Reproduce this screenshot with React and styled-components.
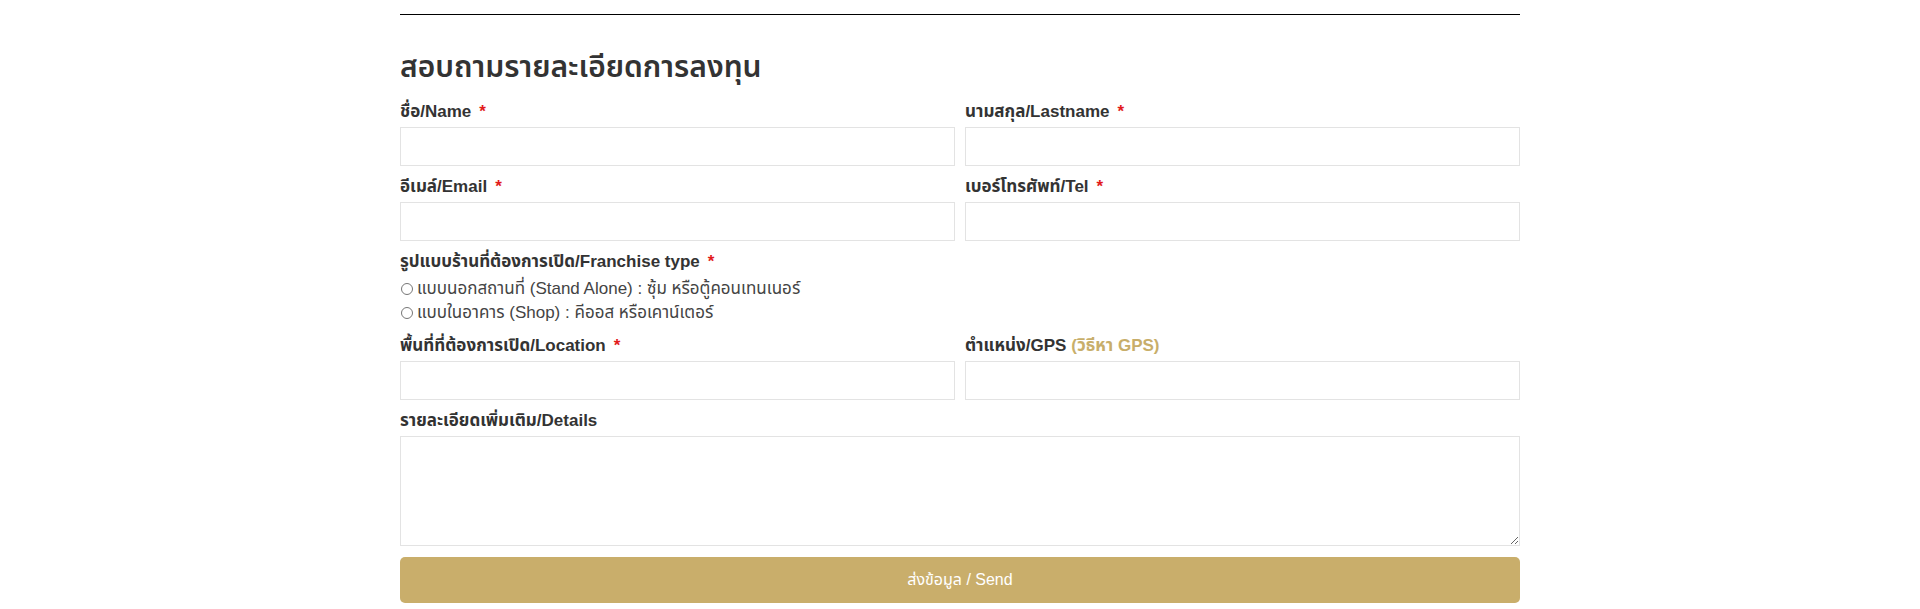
import React from "react"
import styled, { createGlobalStyle } from "styled-components"

const GlobalStyle = createGlobalStyle`
  body {
    margin: 0;
    background: #fff;
    font-family: "Liberation Sans", "Noto Sans Thai", "Noto Sans", sans-serif;
    color: #333;
  }
`

const Wrapper = styled.div`
  width: 1120px;
  margin: 0 auto;
  padding-top: 14px;
`

const Divider = styled.hr`
  margin: 0;
  border: none;
  border-top: 1px solid #000;
`

const Title = styled.h2`
  margin: 30px 0 13px;
  height: 43px;
  line-height: 43px;
  font-size: 30px;
  font-weight: 600;
  color: #333;
`

const Form = styled.form`
  display: flex;
  flex-direction: column;
  gap: 10px;
`

const Row = styled.div`
  display: grid;
  grid-template-columns: 1fr 1fr;
  column-gap: 10px;
`

const Field = styled.div`
  display: flex;
  flex-direction: column;
`

const Label = styled.label`
  height: 22px;
  line-height: 22px;
  margin-bottom: 4px;
  font-size: 17px;
  font-weight: 700;
  color: #333;
`

const Required = styled.span`
  margin-left: 8px;
  color: #e21b1b;
`

const Hint = styled.a`
  margin-left: 5px;
  color: #c8ae6a;
  text-decoration: none;
`

const Input = styled.input`
  box-sizing: border-box;
  width: 100%;
  height: 39px;
  border: 1px solid #e3e3e3;
  padding: 0 10px;
  font-size: 16px;
  outline: none;
`

const TextArea = styled.textarea`
  box-sizing: border-box;
  width: 100%;
  height: 110px;
  border: 1px solid #e3e3e3;
  padding: 8px 10px;
  font-size: 16px;
  font-family: inherit;
  outline: none;
`

const Options = styled.div`
  display: flex;
  flex-direction: column;
`

const Option = styled.label`
  display: flex;
  align-items: center;
  height: 24px;
  font-size: 17px;
  color: #444;
`

const Radio = styled.input`
  width: 12px;
  height: 12px;
  margin: 0 4px 0 1px;
  accent-color: #555;
`

const Button = styled.button`
  width: 100%;
  height: 46px;
  margin-top: 1px;
  border: none;
  border-radius: 5px;
  background: #c9ae6b;
  color: #fff;
  font-size: 16px;
  font-family: inherit;
  cursor: pointer;
`

const TextField = ({ label, required, hint }) => (
  <Field>
    <Label>
      {label}
      {required && <Required>*</Required>}
      {hint && <Hint href="#">{hint}</Hint>}
    </Label>
    <Input type="text" />
  </Field>
)

const App = () => {
  return (
    <>
      <GlobalStyle />
      <Wrapper>
        <Divider />
        <Title>สอบถามรายละเอียดการลงทุน</Title>
        <Form onSubmit={(e) => e.preventDefault()}>
          <Row>
            <TextField label="ชื่อ/Name" required />
            <TextField label="นามสกุล/Lastname" required />
          </Row>
          <Row>
            <TextField label="อีเมล์/Email" required />
            <TextField label="เบอร์โทรศัพท์/Tel" required />
          </Row>
          <Field>
            <Label>
              รูปแบบร้านที่ต้องการเปิด/Franchise type
              <Required>*</Required>
            </Label>
            <Options>
              <Option>
                <Radio type="radio" name="type" />
                แบบนอกสถานที่ (Stand Alone) : ซุ้ม หรือตู้คอนเทนเนอร์
              </Option>
              <Option>
                <Radio type="radio" name="type" />
                แบบในอาคาร (Shop) : คีออส หรือเคาน์เตอร์
              </Option>
            </Options>
          </Field>
          <Row>
            <TextField label="พื้นที่ที่ต้องการเปิด/Location" required />
            <TextField label="ตำแหน่ง/GPS" hint="(วิธีหา GPS)" />
          </Row>
          <Field>
            <Label>รายละเอียดเพิ่มเติม/Details</Label>
            <TextArea />
          </Field>
          <Button type="submit">ส่งข้อมูล / Send</Button>
        </Form>
      </Wrapper>
    </>
  )
}

export default App
